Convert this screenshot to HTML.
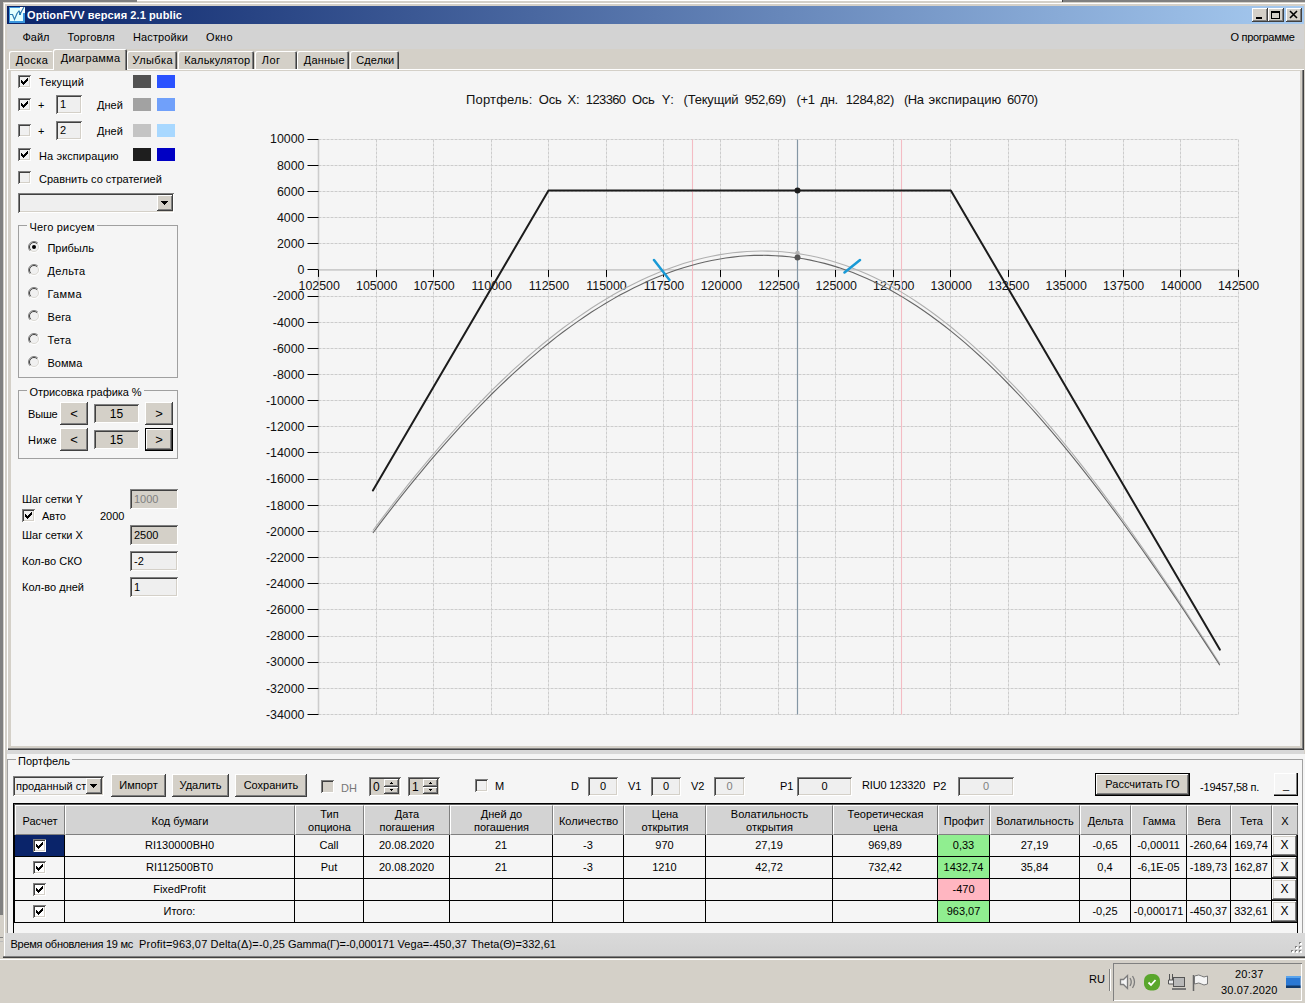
<!DOCTYPE html>
<html lang="ru"><head><meta charset="utf-8"><title>OptionFVV версия 2.1 public</title>
<style>
*{box-sizing:border-box}
html,body{margin:0;padding:0}
body{width:1305px;height:1003px;overflow:hidden;background:#d4d0c8;position:relative;
 font-family:"Liberation Sans",sans-serif;font-size:11px;line-height:13px;color:#000}
div,span{position:absolute;white-space:pre}
.c{text-align:center}
.r{text-align:right}
.btn{background:#d4d0c8;box-shadow:inset -1px -1px 0 #404040,inset 1px 1px 0 #fff,inset -2px -2px 0 #808080,inset 2px 2px 0 #d4d0c8;text-align:center}
.sunk{box-shadow:inset 1px 1px 0 #808080,inset -1px -1px 0 #fff,inset 2px 2px 0 #404040,inset -2px -2px 0 #d4d0c8}
.tb{background:#efefef}
.tbd{background:#d4d0c8}
.cb{width:13px;height:13px;background:#f0f0f0}
.cbw{background:#fff}
.gb{border:1px solid #a0a0a0}
.gl{background:#f5f5f5;padding:0 2px}
.rad{width:12px;height:12px;border-radius:50%;background:#f0f0f0;box-shadow:inset 1px 1px 0 #808080,inset -1px -1px 0 #fff,inset 2px 2px 0 #404040}
.sw{width:18px;height:13px}
.hc{background:#d3d3d3;border-right:1px solid #808080;border-left:1px solid #fff;border-top:1px solid #fff;border-bottom:1px solid #808080;text-align:center}
.cell{border-right:1px solid #000;border-bottom:1px solid #000;background:#f5f5f5;text-align:center;line-height:21px}
svg{position:absolute}
svg text{font-family:"Liberation Sans",sans-serif}
</style></head>
<body>
<div style="left:0px;top:0px;width:137px;height:2px;background:#808080"></div>
<div style="left:137px;top:0px;width:925px;height:1px;background:#fff"></div>
<div style="left:1062px;top:0px;width:243px;height:2px;background:#808080"></div>
<div style="left:1062px;top:0px;width:1px;height:2px;background:#404040"></div>
<div style="left:0px;top:0px;width:3px;height:915px;background:#808080"></div>
<div style="left:0px;top:937px;width:4px;height:1px;background:#808080"></div>
<div style="left:0px;top:941px;width:4px;height:1px;background:#bbb"></div>
<div style="left:3px;top:2px;width:1302px;height:956px;background:#d4d0c8;box-shadow:inset 1px 1px 0 #d4d0c8,inset 2px 2px 0 #fff"></div>
<div style="left:7px;top:6px;width:1297px;height:18px;background:linear-gradient(90deg,#0a246a 0%,#a6caf0 100%)"></div>
<svg width="16" height="16" viewBox="0 0 16 16" style="left:9px;top:7px"><g shape-rendering="crispEdges"><rect width="16" height="16" fill="#3a96de"/><rect x="1" y="1" width="13" height="13" fill="#e2ffff"/><rect x="11" y="0" width="5" height="6" fill="#fff"/><rect x="14" y="0" width="2" height="6" fill="#f4ffff"/><rect x="10" y="5" width="2" height="3" fill="#2a7ab0"/></g><path d="M1 7.500h2.500l2 5 2.500-6 2-2.500 1.500 2.500 1.500-3 2-3.500" fill="none" stroke="#2a7ab0" stroke-width="1.200"/></svg>
<div style="left:27px;top:9px;letter-spacing:0.095px;color:#fff;font-weight:bold">OptionFVV версия 2.1 public</div>
<div class="btn" style="left:1252px;top:8px;width:16px;height:14px;"></div>
<div class="btn" style="left:1268px;top:8px;width:16px;height:14px;"></div>
<div class="btn" style="left:1286px;top:8px;width:16px;height:14px;"></div>
<svg width="60" height="18" viewBox="0 0 60 18" style="left:1250px;top:6px" shape-rendering="crispEdges"><rect x="6" y="11" width="6" height="2" fill="#000"/><rect x="21.5" y="5.5" width="8" height="7" fill="none" stroke="#000"/><rect x="21" y="5" width="9" height="2" fill="#000"/><path d="M40 5l7 7M47 5l-7 7" stroke="#000" stroke-width="1.6" shape-rendering="auto"/></svg>
<div style="left:7px;top:24px;width:1297px;height:25px;background:#d3d3d3"></div>
<div style="left:22.5px;top:31px;letter-spacing:-0.011px;">Файл</div>
<div style="left:67.5px;top:31px;letter-spacing:0.193px;">Торговля</div>
<div style="left:133px;top:31px;letter-spacing:0.118px;">Настройки</div>
<div style="left:206px;top:31px;letter-spacing:0.359px;">Окно</div>
<div style="left:1230.5px;top:31px;letter-spacing:-0.300px;">О программе</div>
<div style="left:9px;top:51px;width:44px;height:19px;box-shadow:inset 1px 1px 0 #fff,inset 0 0 0 #fff;background:#d4d0c8;border-radius:2px 2px 0 0;"></div>
<div style="left:15.8px;top:54px;letter-spacing:0.427px;">Доска</div>
<div style="left:127px;top:51px;width:50px;height:19px;box-shadow:inset 1px 1px 0 #fff,inset -1px 0 0 #404040,inset -2px 0 0 #808080;background:#d4d0c8;border-radius:2px 2px 0 0;"></div>
<div style="left:132.5px;top:54px;letter-spacing:0.408px;">Улыбка</div>
<div style="left:178px;top:51px;width:76px;height:19px;box-shadow:inset 1px 1px 0 #fff,inset -1px 0 0 #404040,inset -2px 0 0 #808080;background:#d4d0c8;border-radius:2px 2px 0 0;"></div>
<div style="left:184.3px;top:54px;letter-spacing:0.146px;">Калькулятор</div>
<div style="left:255px;top:51px;width:42px;height:19px;box-shadow:inset 1px 1px 0 #fff,inset -1px 0 0 #404040,inset -2px 0 0 #808080;background:#d4d0c8;border-radius:2px 2px 0 0;"></div>
<div style="left:261.7px;top:54px;letter-spacing:0.550px;">Лог</div>
<div style="left:297px;top:51px;width:52px;height:19px;box-shadow:inset 1px 1px 0 #fff,inset -1px 0 0 #404040,inset -2px 0 0 #808080;background:#d4d0c8;border-radius:2px 2px 0 0;"></div>
<div style="left:303.8px;top:54px;letter-spacing:0.209px;">Данные</div>
<div style="left:350px;top:51px;width:49px;height:19px;box-shadow:inset 1px 1px 0 #fff,inset -1px 0 0 #404040,inset -2px 0 0 #808080;background:#d4d0c8;border-radius:2px 2px 0 0;"></div>
<div style="left:356.3px;top:54px;letter-spacing:0.085px;">Сделки</div>
<div style="left:7px;top:69px;width:1297px;height:681px;background:#d4d0c8;box-shadow:inset 1px 1px 0 #fff,inset -1px -1px 0 #404040,inset -2px -2px 0 #808080"></div>
<div style="left:11px;top:71px;width:1289px;height:675px;background:#f5f5f5"></div>
<div style="left:53px;top:49px;width:74px;height:21px;box-shadow:inset 1px 1px 0 #fff,inset -1px 0 0 #404040,inset -2px 0 0 #808080;background:#d4d0c8;border-radius:2px 2px 0 0;"></div>
<div style="left:54px;top:68px;width:70px;height:3px;background:#d4d0c8"></div>
<div style="left:60.8px;top:52px;letter-spacing:0.255px;">Диаграмма</div>
<div class="cb sunk" style="left:18px;top:75px;width:13px;height:13px;"><svg width="13" height="13" viewBox="0 0 13 13" style="left:0;top:0" shape-rendering="crispEdges"><path d="M3 5h1v3h-1zM4 6h1v3h-1zM5 7h1v3h-1zM6 6h1v3h-1zM7 5h1v3h-1zM8 4h1v3h-1zM9 3h1v3h-1z" fill="#000"/></svg></div>
<div class="cb sunk" style="left:18px;top:98px;width:13px;height:13px;"><svg width="13" height="13" viewBox="0 0 13 13" style="left:0;top:0" shape-rendering="crispEdges"><path d="M3 5h1v3h-1zM4 6h1v3h-1zM5 7h1v3h-1zM6 6h1v3h-1zM7 5h1v3h-1zM8 4h1v3h-1zM9 3h1v3h-1z" fill="#000"/></svg></div>
<div class="cb sunk" style="left:18px;top:124px;width:13px;height:13px;"></div>
<div class="cb sunk" style="left:18px;top:148px;width:13px;height:13px;"><svg width="13" height="13" viewBox="0 0 13 13" style="left:0;top:0" shape-rendering="crispEdges"><path d="M3 5h1v3h-1zM4 6h1v3h-1zM5 7h1v3h-1zM6 6h1v3h-1zM7 5h1v3h-1zM8 4h1v3h-1zM9 3h1v3h-1z" fill="#000"/></svg></div>
<div class="cb sunk" style="left:18px;top:171px;width:13px;height:13px;"></div>
<div style="left:39px;top:76px;letter-spacing:0.15px">Текущий</div>
<div style="left:38px;top:99px;">+</div>
<div style="left:38px;top:125px;">+</div>
<div class="sunk tb" style="left:56px;top:95px;width:26px;height:19px;"></div>
<div style="left:60px;top:98px;">1</div>
<div class="sunk tb" style="left:56px;top:121px;width:26px;height:19px;"></div>
<div style="left:60px;top:124px;">2</div>
<div style="left:97px;top:99px;">Дней</div>
<div style="left:97px;top:125px;">Дней</div>
<div style="left:39px;top:150px;letter-spacing:0.1px">На экспирацию</div>
<div style="left:39px;top:173px;">Сравнить со стратегией</div>
<div style="left:133px;top:75px;width:18px;height:13px;background:#525252"></div>
<div style="left:157px;top:75px;width:18px;height:13px;background:#2a52ff"></div>
<div style="left:133px;top:98px;width:18px;height:13px;background:#a2a2a2"></div>
<div style="left:157px;top:98px;width:18px;height:13px;background:#70a0fa"></div>
<div style="left:133px;top:124px;width:18px;height:13px;background:#c4c4c4"></div>
<div style="left:157px;top:124px;width:18px;height:13px;background:#a8d8ff"></div>
<div style="left:133px;top:148px;width:18px;height:13px;background:#1e1e1e"></div>
<div style="left:157px;top:148px;width:18px;height:13px;background:#0000c4"></div>
<div class="sunk tb" style="left:18px;top:193px;width:156px;height:20px;"></div>
<div class="btn" style="left:157px;top:195px;width:16px;height:16px;"><svg width="16" height="16" style="left:0;top:0" shape-rendering="crispEdges"><path d="M4 6h7l-3.5 4z" fill="#000"/></svg></div>
<div class="gb" style="left:18px;top:225px;width:160px;height:153px;"></div>
<div class="gl" style="left:27.4px;top:221px;letter-spacing:0.198px;">Чего рисуем</div>
<svg width="12" height="12" viewBox="0 0 12 12" style="left:28px;top:241px"><circle cx="6" cy="6" r="5" fill="#f0f0f0"/><path d="M2.100 9.900A5.500 5.500 0 0 1 9.900 2.100" fill="none" stroke="#808080"/><path d="M9.900 2.100A5.500 5.500 0 0 1 2.100 9.900" fill="none" stroke="#fff"/><path d="M2.800 9.200A4.500 4.500 0 0 1 9.200 2.800" fill="none" stroke="#404040"/><path d="M9.200 2.800A4.500 4.500 0 0 1 2.800 9.200" fill="none" stroke="#dcdad4"/><circle cx="6" cy="6" r="2" fill="#000"/></svg>
<div style="left:47.4px;top:242px;letter-spacing:-0.004px;">Прибыль</div>
<svg width="12" height="12" viewBox="0 0 12 12" style="left:28px;top:264px"><circle cx="6" cy="6" r="5" fill="#f0f0f0"/><path d="M2.100 9.900A5.500 5.500 0 0 1 9.900 2.100" fill="none" stroke="#808080"/><path d="M9.900 2.100A5.500 5.500 0 0 1 2.100 9.900" fill="none" stroke="#fff"/><path d="M2.800 9.200A4.500 4.500 0 0 1 9.200 2.800" fill="none" stroke="#404040"/><path d="M9.200 2.800A4.500 4.500 0 0 1 2.800 9.200" fill="none" stroke="#dcdad4"/></svg>
<div style="left:47.4px;top:265px;letter-spacing:0.445px;">Дельта</div>
<svg width="12" height="12" viewBox="0 0 12 12" style="left:28px;top:287px"><circle cx="6" cy="6" r="5" fill="#f0f0f0"/><path d="M2.100 9.900A5.500 5.500 0 0 1 9.900 2.100" fill="none" stroke="#808080"/><path d="M9.900 2.100A5.500 5.500 0 0 1 2.100 9.900" fill="none" stroke="#fff"/><path d="M2.800 9.200A4.500 4.500 0 0 1 9.200 2.800" fill="none" stroke="#404040"/><path d="M9.200 2.800A4.500 4.500 0 0 1 2.800 9.200" fill="none" stroke="#dcdad4"/></svg>
<div style="left:47.4px;top:288px;letter-spacing:0.380px;">Гамма</div>
<svg width="12" height="12" viewBox="0 0 12 12" style="left:28px;top:310px"><circle cx="6" cy="6" r="5" fill="#f0f0f0"/><path d="M2.100 9.900A5.500 5.500 0 0 1 9.900 2.100" fill="none" stroke="#808080"/><path d="M9.900 2.100A5.500 5.500 0 0 1 2.100 9.900" fill="none" stroke="#fff"/><path d="M2.800 9.200A4.500 4.500 0 0 1 9.200 2.800" fill="none" stroke="#404040"/><path d="M9.200 2.800A4.500 4.500 0 0 1 2.800 9.200" fill="none" stroke="#dcdad4"/></svg>
<div style="left:47.4px;top:311px;letter-spacing:0.164px;">Вега</div>
<svg width="12" height="12" viewBox="0 0 12 12" style="left:28px;top:333px"><circle cx="6" cy="6" r="5" fill="#f0f0f0"/><path d="M2.100 9.900A5.500 5.500 0 0 1 9.900 2.100" fill="none" stroke="#808080"/><path d="M9.900 2.100A5.500 5.500 0 0 1 2.100 9.900" fill="none" stroke="#fff"/><path d="M2.800 9.200A4.500 4.500 0 0 1 9.200 2.800" fill="none" stroke="#404040"/><path d="M9.200 2.800A4.500 4.500 0 0 1 2.800 9.200" fill="none" stroke="#dcdad4"/></svg>
<div style="left:47.4px;top:334px;letter-spacing:0.278px;">Тета</div>
<svg width="12" height="12" viewBox="0 0 12 12" style="left:28px;top:356px"><circle cx="6" cy="6" r="5" fill="#f0f0f0"/><path d="M2.100 9.900A5.500 5.500 0 0 1 9.900 2.100" fill="none" stroke="#808080"/><path d="M9.900 2.100A5.500 5.500 0 0 1 2.100 9.900" fill="none" stroke="#fff"/><path d="M2.800 9.200A4.500 4.500 0 0 1 9.200 2.800" fill="none" stroke="#404040"/><path d="M9.200 2.800A4.500 4.500 0 0 1 2.800 9.200" fill="none" stroke="#dcdad4"/></svg>
<div style="left:47.4px;top:357px;letter-spacing:0.060px;">Вомма</div>
<div class="gb" style="left:18px;top:390px;width:160px;height:69px;"></div>
<div class="gl" style="left:27.4px;top:386px;letter-spacing:-0.049px;">Отрисовка графика %</div>
<div style="left:28px;top:408px;letter-spacing:-0.172px;">Выше</div>
<div class="btn" style="left:60px;top:402px;width:28px;height:23px;line-height:23px;font-size:13px">&lt;</div>
<div class="sunk tbd c" style="left:94px;top:404px;width:45px;height:19px;line-height:21px;font-size:12px">15</div>
<div class="btn" style="left:145px;top:402px;width:28px;height:23px;line-height:23px;font-size:13px">&gt;</div>
<div style="left:28px;top:434px;letter-spacing:0.359px;">Ниже</div>
<div class="btn" style="left:60px;top:428px;width:28px;height:23px;line-height:23px;font-size:13px">&lt;</div>
<div class="sunk tbd c" style="left:94px;top:430px;width:45px;height:19px;line-height:21px;font-size:12px">15</div>
<div style="left:145px;top:428px;width:28px;height:23px;background:#000"></div>
<div class="btn" style="left:146px;top:429px;width:26px;height:21px;line-height:21px;font-size:13px">&gt;</div>
<div style="left:22px;top:493px;">Шаг сетки Y</div>
<div class="sunk tbd" style="left:130px;top:489px;width:48px;height:20px;"></div>
<div style="left:134px;top:493px;color:#808080">1000</div>
<div class="cb sunk" style="left:22px;top:509px;width:13px;height:13px;"><svg width="13" height="13" viewBox="0 0 13 13" style="left:0;top:0" shape-rendering="crispEdges"><path d="M3 5h1v3h-1zM4 6h1v3h-1zM5 7h1v3h-1zM6 6h1v3h-1zM7 5h1v3h-1zM8 4h1v3h-1zM9 3h1v3h-1z" fill="#000"/></svg></div>
<div style="left:42px;top:510px;">Авто</div>
<div style="left:100px;top:510px;">2000</div>
<div style="left:22px;top:529px;">Шаг сетки X</div>
<div class="sunk tbd" style="left:130px;top:525px;width:48px;height:20px;"></div>
<div style="left:134px;top:529px;">2500</div>
<div style="left:22px;top:555px;">Кол-во СКО</div>
<div class="sunk tb" style="left:130px;top:551px;width:48px;height:20px;"></div>
<div style="left:134px;top:555px;">-2</div>
<div style="left:22px;top:581px;">Кол-во дней</div>
<div class="sunk tb" style="left:130px;top:577px;width:48px;height:20px;"></div>
<div style="left:134px;top:581px;">1</div>
<svg width="1305" height="1003" viewBox="0 0 1305 1003" style="left:0;top:0"><path d="M376.5 139.5V714.5M433.5 139.5V714.5M491.5 139.5V714.5M548.5 139.5V714.5M606.5 139.5V714.5M663.5 139.5V714.5M720.5 139.5V714.5M778.5 139.5V714.5M835.5 139.5V714.5M893.5 139.5V714.5M950.5 139.5V714.5M1008.5 139.5V714.5M1065.5 139.5V714.5M1123.5 139.5V714.5M1180.5 139.5V714.5M1238.5 139.5V714.5M318.5 714.5H1238.5M318.5 688.5H1238.5M318.5 662.5H1238.5M318.5 636.5H1238.5M318.5 609.5H1238.5M318.5 583.5H1238.5M318.5 557.5H1238.5M318.5 531.5H1238.5M318.5 505.5H1238.5M318.5 479.5H1238.5M318.5 452.5H1238.5M318.5 426.5H1238.5M318.5 400.5H1238.5M318.5 374.5H1238.5M318.5 348.5H1238.5M318.5 322.5H1238.5M318.5 296.5H1238.5M318.5 243.5H1238.5M318.5 217.5H1238.5M318.5 191.5H1238.5M318.5 165.5H1238.5M318.5 139.5H1238.5" fill="none" stroke="#cccccc" stroke-width="1" stroke-dasharray="3 1"/><path d="M318.5 139.5V714.5M318.5 269.9H1238.5" fill="none" stroke="#cccccc" stroke-width="1.6"/><path d="M307.5 714.5H318.5M307.5 688.5H318.5M307.5 662.5H318.5M307.5 636.5H318.5M307.5 609.5H318.5M307.5 583.5H318.5M307.5 557.5H318.5M307.5 531.5H318.5M307.5 505.5H318.5M307.5 479.5H318.5M307.5 452.5H318.5M307.5 426.5H318.5M307.5 400.5H318.5M307.5 374.5H318.5M307.5 348.5H318.5M307.5 322.5H318.5M307.5 296.5H318.5M307.5 269.5H318.5M307.5 243.5H318.5M307.5 217.5H318.5M307.5 191.5H318.5M307.5 165.5H318.5M307.5 139.5H318.5M318.5 269.9V276.9M376.5 269.9V276.9M433.5 269.9V276.9M491.5 269.9V276.9M548.5 269.9V276.9M606.5 269.9V276.9M663.5 269.9V276.9M720.5 269.9V276.9M778.5 269.9V276.9M835.5 269.9V276.9M893.5 269.9V276.9M950.5 269.9V276.9M1008.5 269.9V276.9M1065.5 269.9V276.9M1123.5 269.9V276.9M1180.5 269.9V276.9M1238.5 269.9V276.9" fill="none" stroke="#000" stroke-width="1"/><g font-size="12.4" fill="#111"><text x="304.5" y="718.8" text-anchor="end">-34000</text><text x="304.5" y="692.6" text-anchor="end">-32000</text><text x="304.5" y="666.4" text-anchor="end">-30000</text><text x="304.5" y="640.3" text-anchor="end">-28000</text><text x="304.5" y="614.1" text-anchor="end">-26000</text><text x="304.5" y="588.0" text-anchor="end">-24000</text><text x="304.5" y="561.8" text-anchor="end">-22000</text><text x="304.5" y="535.7" text-anchor="end">-20000</text><text x="304.5" y="509.6" text-anchor="end">-18000</text><text x="304.5" y="483.4" text-anchor="end">-16000</text><text x="304.5" y="457.2" text-anchor="end">-14000</text><text x="304.5" y="431.1" text-anchor="end">-12000</text><text x="304.5" y="404.9" text-anchor="end">-10000</text><text x="304.5" y="378.8" text-anchor="end">-8000</text><text x="304.5" y="352.6" text-anchor="end">-6000</text><text x="304.5" y="326.5" text-anchor="end">-4000</text><text x="304.5" y="300.3" text-anchor="end">-2000</text><text x="304.5" y="274.2" text-anchor="end">0</text><text x="304.5" y="248.0" text-anchor="end">2000</text><text x="304.5" y="221.9" text-anchor="end">4000</text><text x="304.5" y="195.8" text-anchor="end">6000</text><text x="304.5" y="169.6" text-anchor="end">8000</text><text x="304.5" y="143.4" text-anchor="end">10000</text><text x="319.2" y="289.9" text-anchor="middle">102500</text><text x="376.7" y="289.9" text-anchor="middle">105000</text><text x="434.1" y="289.9" text-anchor="middle">107500</text><text x="491.6" y="289.9" text-anchor="middle">110000</text><text x="549.0" y="289.9" text-anchor="middle">112500</text><text x="606.5" y="289.9" text-anchor="middle">115000</text><text x="664.0" y="289.9" text-anchor="middle">117500</text><text x="721.4" y="289.9" text-anchor="middle">120000</text><text x="778.9" y="289.9" text-anchor="middle">122500</text><text x="836.3" y="289.9" text-anchor="middle">125000</text><text x="893.8" y="289.9" text-anchor="middle">127500</text><text x="951.3" y="289.9" text-anchor="middle">130000</text><text x="1008.7" y="289.9" text-anchor="middle">132500</text><text x="1066.2" y="289.9" text-anchor="middle">135000</text><text x="1123.6" y="289.9" text-anchor="middle">137500</text><text x="1181.1" y="289.9" text-anchor="middle">140000</text><text x="1238.6" y="289.9" text-anchor="middle">142500</text></g><g font-size="13" fill="#111"><text x="466.1" y="104" textLength="66.2" lengthAdjust="spacing">Портфель:</text><text x="538.8" y="104" textLength="23.0" lengthAdjust="spacing">Ось</text><text x="567.5" y="104" textLength="12.0" lengthAdjust="spacing">X:</text><text x="585.8" y="104" textLength="40.3" lengthAdjust="spacing">123360</text><text x="631.9" y="104" textLength="23.0" lengthAdjust="spacing">Ось</text><text x="661.8" y="104" textLength="12.0" lengthAdjust="spacing">Y:</text><text x="683.5" y="104" textLength="55.0" lengthAdjust="spacing">(Текущий</text><text x="744.5" y="104" textLength="41.5" lengthAdjust="spacing">952,69)</text><text x="796.5" y="104" textLength="18.5" lengthAdjust="spacing">(+1</text><text x="820.5" y="104" textLength="17.5" lengthAdjust="spacing">дн.</text><text x="845.7" y="104" textLength="48.6" lengthAdjust="spacing">1284,82)</text><text x="904.0" y="104" textLength="20.0" lengthAdjust="spacing">(На</text><text x="928.5" y="104" textLength="72.7" lengthAdjust="spacing">экспирацию</text><text x="1007.0" y="104" textLength="31.0" lengthAdjust="spacing">6070)</text></g><path d="M692.5 139.5V714.5M901.5 139.5V714.5" stroke="#f4bcc4" stroke-width="1.1" fill="none"/><path d="M797.5 139.5V714.5" stroke="#8496a4" stroke-width="1.2" fill="none"/><polyline points="372.9,530.5 379.9,521.1 387.0,511.8 394.0,502.6 401.1,493.6 408.1,484.7 415.2,475.9 422.3,467.3 429.3,458.9 436.4,450.5 443.4,442.4 450.5,434.3 457.5,426.5 464.6,418.7 471.7,411.2 478.7,403.8 485.8,396.5 492.8,389.4 499.9,382.5 506.9,375.8 514.0,369.2 521.1,362.8 528.1,356.5 535.2,350.4 542.2,344.5 549.3,338.8 556.3,333.2 563.4,327.8 570.5,322.6 577.5,317.6 584.6,312.7 591.6,308.0 598.7,303.5 605.8,299.2 612.8,295.0 619.9,291.1 626.9,287.3 634.0,283.7 641.0,280.2 648.1,277.0 655.2,273.9 662.2,271.1 669.3,268.4 676.3,265.9 683.4,263.6 690.4,261.5 697.5,259.5 704.6,257.8 711.6,256.3 718.7,254.9 725.7,253.8 732.8,252.8 739.8,252.1 746.9,251.5 754.0,251.2 761.0,251.0 768.1,251.1 775.1,251.3 782.2,251.8 789.2,252.5 796.3,253.4 803.4,254.5 810.4,255.8 817.5,257.3 824.5,259.0 831.6,261.0 838.7,263.2 845.7,265.6 852.8,268.2 859.8,271.0 866.9,274.1 873.9,277.3 881.0,280.8 888.1,284.5 895.1,288.4 902.2,292.6 909.2,296.9 916.3,301.5 923.3,306.3 930.4,311.3 937.5,316.5 944.5,321.9 951.6,327.5 958.6,333.4 965.7,339.4 972.7,345.6 979.8,352.1 986.9,358.7 993.9,365.5 1001.0,372.6 1008.0,379.8 1015.1,387.2 1022.2,394.7 1029.2,402.5 1036.3,410.4 1043.3,418.5 1050.4,426.8 1057.4,435.2 1064.5,443.8 1071.6,452.5 1078.6,461.4 1085.7,470.4 1092.7,479.5 1099.8,488.8 1106.8,498.3 1113.9,507.8 1121.0,517.5 1128.0,527.3 1135.1,537.2 1142.1,547.3 1149.2,557.4 1156.2,567.6 1163.3,578.0 1170.4,588.4 1177.4,598.9 1184.5,609.5 1191.5,620.2 1198.6,631.0 1205.6,641.8 1212.7,652.7 1219.8,663.7" fill="none" stroke="#b0b0b0" stroke-width="1.1"/><polyline points="372.9,533.0 379.9,523.7 387.0,514.4 394.0,505.4 401.1,496.4 408.1,487.6 415.2,478.9 422.3,470.4 429.3,461.9 436.4,453.7 443.4,445.6 450.5,437.6 457.5,429.8 464.6,422.1 471.7,414.6 478.7,407.3 485.8,400.1 492.8,393.0 499.9,386.2 506.9,379.5 514.0,372.9 521.1,366.5 528.1,360.3 535.2,354.3 542.2,348.4 549.3,342.7 556.3,337.1 563.4,331.8 570.5,326.6 577.5,321.6 584.6,316.7 591.6,312.0 598.7,307.6 605.8,303.2 612.8,299.1 619.9,295.1 626.9,291.4 634.0,287.8 641.0,284.4 648.1,281.1 655.2,278.1 662.2,275.2 669.3,272.6 676.3,270.1 683.4,267.8 690.4,265.7 697.5,263.7 704.6,262.0 711.6,260.5 718.7,259.2 725.7,258.0 732.8,257.1 739.8,256.3 746.9,255.8 754.0,255.4 761.0,255.3 768.1,255.4 775.1,255.7 782.2,256.1 789.2,256.8 796.3,257.7 803.4,258.8 810.4,260.1 817.5,261.7 824.5,263.4 831.6,265.4 838.7,267.6 845.7,270.0 852.8,272.6 859.8,275.4 866.9,278.4 873.9,281.7 881.0,285.2 888.1,288.8 895.1,292.7 902.2,296.9 909.2,301.2 916.3,305.7 923.3,310.5 930.4,315.5 937.5,320.7 944.5,326.0 951.6,331.6 958.6,337.4 965.7,343.4 972.7,349.6 979.8,356.0 986.9,362.6 993.9,369.4 1001.0,376.3 1008.0,383.5 1015.1,390.8 1022.2,398.3 1029.2,406.0 1036.3,413.9 1043.3,421.9 1050.4,430.1 1057.4,438.4 1064.5,446.9 1071.6,455.6 1078.6,464.4 1085.7,473.3 1092.7,482.4 1099.8,491.6 1106.8,501.0 1113.9,510.4 1121.0,520.0 1128.0,529.8 1135.1,539.6 1142.1,549.5 1149.2,559.6 1156.2,569.8 1163.3,580.0 1170.4,590.4 1177.4,600.8 1184.5,611.3 1191.5,622.0 1198.6,632.7 1205.6,643.4 1212.7,654.3 1219.8,665.2" fill="none" stroke="#666" stroke-width="1.1"/><polyline points="372.9,490.4 548.5,190.5 950.8,190.5 1219.8,649.6" fill="none" stroke="#1c1c1c" stroke-width="2" stroke-linejoin="round" stroke-linecap="round"/><path d="M654 260L669.500 280M844.500 272.500L860 260" stroke="#1a9ad6" stroke-width="2.500" fill="none" stroke-linecap="round"/><circle cx="797.5" cy="253.1" r="2.3" fill="#b4b4b4"/><circle cx="797.5" cy="257.4" r="3" fill="#555"/><circle cx="797.5" cy="190.5" r="3" fill="#1c1c1c"/></svg>
<div style="left:7px;top:750px;width:1297px;height:4px;background:#d8d8d8"></div>
<div style="left:7px;top:754px;width:1298px;height:179px;background:#f5f5f5"></div>
<div class="gb" style="left:7px;top:759px;width:1296px;height:175px;border-color:#a0a0a0;border-bottom:none"></div>
<div class="gl" style="left:16px;top:755px;">Портфель</div>
<div class="sunk tb" style="left:13px;top:776px;width:91px;height:20px;"></div>
<div style="left:16px;top:780px;">проданный ст</div>
<div class="btn" style="left:86px;top:778px;width:16px;height:16px;"><svg width="16" height="16" style="left:0;top:0" shape-rendering="crispEdges"><path d="M4 6h7l-3.5 4z" fill="#000"/></svg></div>
<div class="btn" style="left:111px;top:774px;width:55px;height:23px;line-height:22px">Импорт</div>
<div class="btn" style="left:172px;top:774px;width:57px;height:23px;line-height:22px">Удалить</div>
<div class="btn" style="left:235px;top:774px;width:72px;height:23px;line-height:22px">Сохранить</div>
<div class="cb sunk" style="left:321px;top:780px;width:13px;height:13px;background:#d4d0c8;"></div>
<div style="left:341px;top:782px;color:#777">DH</div>
<div class="sunk tbd" style="left:369px;top:777px;width:32px;height:19px;"></div>
<div style="left:373px;top:781px;font-size:12px">0</div>
<div class="btn" style="left:384px;top:779px;width:15px;height:8px;"><svg width="15" height="8" style="left:0;top:0" shape-rendering="crispEdges"><path d="M6 5h3v-1h-1v-1h-1v1h-1z" fill="#000"/></svg></div>
<div class="btn" style="left:384px;top:787px;width:15px;height:7px;"><svg width="15" height="7" style="left:0;top:0" shape-rendering="crispEdges"><path d="M6 2h3v1h-1v1h-1v-1h-1z" fill="#000"/></svg></div>
<div class="sunk tbd" style="left:408px;top:777px;width:32px;height:19px;"></div>
<div style="left:412px;top:781px;font-size:12px">1</div>
<div class="btn" style="left:423px;top:779px;width:15px;height:8px;"><svg width="15" height="8" style="left:0;top:0" shape-rendering="crispEdges"><path d="M6 5h3v-1h-1v-1h-1v1h-1z" fill="#000"/></svg></div>
<div class="btn" style="left:423px;top:787px;width:15px;height:7px;"><svg width="15" height="7" style="left:0;top:0" shape-rendering="crispEdges"><path d="M6 2h3v1h-1v1h-1v-1h-1z" fill="#000"/></svg></div>
<div class="cb sunk" style="left:475px;top:779px;width:13px;height:13px;"></div>
<div style="left:495px;top:780px;">M</div>
<div style="left:571px;top:780px;">D</div>
<div class="sunk tb c" style="left:588px;top:777px;width:30px;height:19px;line-height:19px">0</div>
<div style="left:628px;top:780px;">V1</div>
<div class="sunk tb c" style="left:651px;top:777px;width:30px;height:19px;line-height:19px">0</div>
<div style="left:691px;top:780px;">V2</div>
<div class="sunk tb c" style="left:714px;top:777px;width:31px;height:19px;line-height:19px;color:#808080">0</div>
<div style="left:780px;top:780px;">P1</div>
<div class="sunk tb c" style="left:797px;top:777px;width:55px;height:19px;line-height:19px">0</div>
<div style="left:862px;top:779px;letter-spacing:-0.15px">RIU0 123320</div>
<div style="left:933px;top:780px;">P2</div>
<div class="sunk tb c" style="left:958px;top:777px;width:56px;height:19px;line-height:19px;color:#808080">0</div>
<div style="left:1095px;top:773px;width:95px;height:23px;background:#000"></div>
<div class="btn" style="left:1096px;top:774px;width:93px;height:21px;line-height:20px">Рассчитать ГО</div>
<div style="left:1200px;top:781px;letter-spacing:-0.2px">-19457,58 п.</div>
<div style="left:1274px;top:773px;width:24px;height:23px;background:#f5f5f5;line-height:24px;text-align:center;box-shadow:inset -1px -1px 0 #000,inset -2px -2px 0 #808080,inset 1px 1px 0 #fff">_</div>
<div style="left:13px;top:803px;width:1285px;height:130px;background:#f5f5f5;border:1px solid #000;border-bottom:none"></div>
<div style="left:14px;top:804px;width:1283px;height:119px;background:#000"></div>
<div style="left:14px;top:804px;width:1283px;height:31px;background:#5a5a5a"></div>
<div class="hc" style="left:15px;top:805px;width:50px;height:30px;line-height:30px;padding-top:0px">Расчет</div>
<div class="hc" style="left:65px;top:805px;width:230px;height:30px;line-height:30px;padding-top:0px">Код бумаги</div>
<div class="hc" style="left:295px;top:805px;width:69px;height:30px;line-height:13px;padding-top:2px">Тип
опциона</div>
<div class="hc" style="left:364px;top:805px;width:86px;height:30px;line-height:13px;padding-top:2px">Дата
погашения</div>
<div class="hc" style="left:450px;top:805px;width:103px;height:30px;line-height:13px;padding-top:2px">Дней до
погашения</div>
<div class="hc" style="left:553px;top:805px;width:71px;height:30px;line-height:30px;padding-top:0px">Количество</div>
<div class="hc" style="left:624px;top:805px;width:82px;height:30px;line-height:13px;padding-top:2px">Цена
открытия</div>
<div class="hc" style="left:706px;top:805px;width:127px;height:30px;line-height:13px;padding-top:2px">Волатильность
открытия</div>
<div class="hc" style="left:833px;top:805px;width:105px;height:30px;line-height:13px;padding-top:2px">Теоретическая
цена</div>
<div class="hc" style="left:938px;top:805px;width:52px;height:30px;line-height:30px;padding-top:0px">Профит</div>
<div class="hc" style="left:990px;top:805px;width:90px;height:30px;line-height:30px;padding-top:0px">Волатильность</div>
<div class="hc" style="left:1080px;top:805px;width:51px;height:30px;line-height:30px;padding-top:0px">Дельта</div>
<div class="hc" style="left:1131px;top:805px;width:56px;height:30px;line-height:30px;padding-top:0px">Гамма</div>
<div class="hc" style="left:1187px;top:805px;width:44px;height:30px;line-height:30px;padding-top:0px">Вега</div>
<div class="hc" style="left:1231px;top:805px;width:41px;height:30px;line-height:30px;padding-top:0px">Тета</div>
<div class="hc" style="left:1272px;top:805px;width:26px;height:30px;line-height:30px;padding-top:0px">X</div>
<div class="cell" style="left:15px;top:835px;width:50px;height:22px;background:#0a246a;"></div>
<div class="cell" style="left:65px;top:835px;width:230px;height:22px;">RI130000BH0</div>
<div class="cell" style="left:295px;top:835px;width:69px;height:22px;">Call</div>
<div class="cell" style="left:364px;top:835px;width:86px;height:22px;">20.08.2020</div>
<div class="cell" style="left:450px;top:835px;width:103px;height:22px;">21</div>
<div class="cell" style="left:553px;top:835px;width:71px;height:22px;">-3</div>
<div class="cell" style="left:624px;top:835px;width:82px;height:22px;">970</div>
<div class="cell" style="left:706px;top:835px;width:127px;height:22px;">27,19</div>
<div class="cell" style="left:833px;top:835px;width:105px;height:22px;">969,89</div>
<div class="cell" style="left:938px;top:835px;width:52px;height:22px;background:#90ee90;">0,33</div>
<div class="cell" style="left:990px;top:835px;width:90px;height:22px;">27,19</div>
<div class="cell" style="left:1080px;top:835px;width:51px;height:22px;">-0,65</div>
<div class="cell" style="left:1131px;top:835px;width:56px;height:22px;">-0,00011</div>
<div class="cell" style="left:1187px;top:835px;width:44px;height:22px;">-260,64</div>
<div class="cell" style="left:1231px;top:835px;width:41px;height:22px;">169,74</div>
<div class="cell" style="left:1272px;top:835px;width:26px;height:22px;"></div>
<div class="cb sunk cbw" style="left:33px;top:839px;width:13px;height:13px;"><svg width="13" height="13" viewBox="0 0 13 13" style="left:0;top:0" shape-rendering="crispEdges"><path d="M3 5h1v3h-1zM4 6h1v3h-1zM5 7h1v3h-1zM6 6h1v3h-1zM7 5h1v3h-1zM8 4h1v3h-1zM9 3h1v3h-1z" fill="#000"/></svg></div>
<div class="btn" style="left:1272px;top:835px;width:25px;height:21px;background:#f5f5f5;line-height:20px;font-size:12px">X</div>
<div class="cell" style="left:15px;top:857px;width:50px;height:22px;"></div>
<div class="cell" style="left:65px;top:857px;width:230px;height:22px;">RI112500BT0</div>
<div class="cell" style="left:295px;top:857px;width:69px;height:22px;">Put</div>
<div class="cell" style="left:364px;top:857px;width:86px;height:22px;">20.08.2020</div>
<div class="cell" style="left:450px;top:857px;width:103px;height:22px;">21</div>
<div class="cell" style="left:553px;top:857px;width:71px;height:22px;">-3</div>
<div class="cell" style="left:624px;top:857px;width:82px;height:22px;">1210</div>
<div class="cell" style="left:706px;top:857px;width:127px;height:22px;">42,72</div>
<div class="cell" style="left:833px;top:857px;width:105px;height:22px;">732,42</div>
<div class="cell" style="left:938px;top:857px;width:52px;height:22px;background:#90ee90;">1432,74</div>
<div class="cell" style="left:990px;top:857px;width:90px;height:22px;">35,84</div>
<div class="cell" style="left:1080px;top:857px;width:51px;height:22px;">0,4</div>
<div class="cell" style="left:1131px;top:857px;width:56px;height:22px;">-6,1E-05</div>
<div class="cell" style="left:1187px;top:857px;width:44px;height:22px;">-189,73</div>
<div class="cell" style="left:1231px;top:857px;width:41px;height:22px;">162,87</div>
<div class="cell" style="left:1272px;top:857px;width:26px;height:22px;"></div>
<div class="cb sunk cbw" style="left:33px;top:861px;width:13px;height:13px;"><svg width="13" height="13" viewBox="0 0 13 13" style="left:0;top:0" shape-rendering="crispEdges"><path d="M3 5h1v3h-1zM4 6h1v3h-1zM5 7h1v3h-1zM6 6h1v3h-1zM7 5h1v3h-1zM8 4h1v3h-1zM9 3h1v3h-1z" fill="#000"/></svg></div>
<div class="btn" style="left:1272px;top:857px;width:25px;height:21px;background:#f5f5f5;line-height:20px;font-size:12px">X</div>
<div class="cell" style="left:15px;top:879px;width:50px;height:22px;"></div>
<div class="cell" style="left:65px;top:879px;width:230px;height:22px;">FixedProfit</div>
<div class="cell" style="left:295px;top:879px;width:69px;height:22px;"></div>
<div class="cell" style="left:364px;top:879px;width:86px;height:22px;"></div>
<div class="cell" style="left:450px;top:879px;width:103px;height:22px;"></div>
<div class="cell" style="left:553px;top:879px;width:71px;height:22px;"></div>
<div class="cell" style="left:624px;top:879px;width:82px;height:22px;"></div>
<div class="cell" style="left:706px;top:879px;width:127px;height:22px;"></div>
<div class="cell" style="left:833px;top:879px;width:105px;height:22px;"></div>
<div class="cell" style="left:938px;top:879px;width:52px;height:22px;background:#ffb6c1;">-470</div>
<div class="cell" style="left:990px;top:879px;width:90px;height:22px;"></div>
<div class="cell" style="left:1080px;top:879px;width:51px;height:22px;"></div>
<div class="cell" style="left:1131px;top:879px;width:56px;height:22px;"></div>
<div class="cell" style="left:1187px;top:879px;width:44px;height:22px;"></div>
<div class="cell" style="left:1231px;top:879px;width:41px;height:22px;"></div>
<div class="cell" style="left:1272px;top:879px;width:26px;height:22px;"></div>
<div class="cb sunk cbw" style="left:33px;top:883px;width:13px;height:13px;"><svg width="13" height="13" viewBox="0 0 13 13" style="left:0;top:0" shape-rendering="crispEdges"><path d="M3 5h1v3h-1zM4 6h1v3h-1zM5 7h1v3h-1zM6 6h1v3h-1zM7 5h1v3h-1zM8 4h1v3h-1zM9 3h1v3h-1z" fill="#000"/></svg></div>
<div class="btn" style="left:1272px;top:879px;width:25px;height:21px;background:#f5f5f5;line-height:20px;font-size:12px">X</div>
<div class="cell" style="left:15px;top:901px;width:50px;height:22px;"></div>
<div class="cell" style="left:65px;top:901px;width:230px;height:22px;">Итого:</div>
<div class="cell" style="left:295px;top:901px;width:69px;height:22px;"></div>
<div class="cell" style="left:364px;top:901px;width:86px;height:22px;"></div>
<div class="cell" style="left:450px;top:901px;width:103px;height:22px;"></div>
<div class="cell" style="left:553px;top:901px;width:71px;height:22px;"></div>
<div class="cell" style="left:624px;top:901px;width:82px;height:22px;"></div>
<div class="cell" style="left:706px;top:901px;width:127px;height:22px;"></div>
<div class="cell" style="left:833px;top:901px;width:105px;height:22px;"></div>
<div class="cell" style="left:938px;top:901px;width:52px;height:22px;background:#90ee90;">963,07</div>
<div class="cell" style="left:990px;top:901px;width:90px;height:22px;"></div>
<div class="cell" style="left:1080px;top:901px;width:51px;height:22px;">-0,25</div>
<div class="cell" style="left:1131px;top:901px;width:56px;height:22px;">-0,000171</div>
<div class="cell" style="left:1187px;top:901px;width:44px;height:22px;">-450,37</div>
<div class="cell" style="left:1231px;top:901px;width:41px;height:22px;">332,61</div>
<div class="cell" style="left:1272px;top:901px;width:26px;height:22px;"></div>
<div class="cb sunk cbw" style="left:33px;top:905px;width:13px;height:13px;"><svg width="13" height="13" viewBox="0 0 13 13" style="left:0;top:0" shape-rendering="crispEdges"><path d="M3 5h1v3h-1zM4 6h1v3h-1zM5 7h1v3h-1zM6 6h1v3h-1zM7 5h1v3h-1zM8 4h1v3h-1zM9 3h1v3h-1z" fill="#000"/></svg></div>
<div class="btn" style="left:1272px;top:901px;width:25px;height:21px;background:#f5f5f5;line-height:20px;font-size:12px">X</div>
<div style="left:5px;top:933px;width:1300px;height:23px;background:linear-gradient(180deg,#dadada 0%,#d3d3d3 100%)"></div>
<div style="left:10.5px;top:938px;letter-spacing:-0.272px;">Время обновления 19 мс</div>
<div style="left:139px;top:938px;letter-spacing:0.212px;">Profit=963,07</div>
<div style="left:210.5px;top:938px;letter-spacing:0.189px;">Delta(Δ)=-0,25</div>
<div style="left:288px;top:938px;letter-spacing:-0.110px;">Gamma(Γ)=-0,000171</div>
<div style="left:397.5px;top:938px;letter-spacing:0.057px;">Vega=-450,37</div>
<div style="left:471px;top:938px;letter-spacing:0.061px;">Theta(Θ)=332,61</div>
<div style="left:3px;top:956px;width:1302px;height:1px;background:#808080"></div>
<div style="left:3px;top:957px;width:1302px;height:1px;background:#404040"></div>
<div style="left:0px;top:959px;width:1305px;height:1px;background:#fff"></div>
<div style="left:1089px;top:973px;">RU</div>
<div style="left:1109px;top:969px;width:1px;height:22px;background:#808080"></div>
<div style="left:1110px;top:969px;width:1px;height:22px;background:#fff"></div>
<div style="left:1113px;top:963px;width:189px;height:38px;box-shadow:inset 1px 1px 0 #808080,inset -1px -1px 0 #fff"></div>
<div style="left:1235px;top:968px;letter-spacing:0.2px">20:37</div>
<div style="left:1221px;top:984px;letter-spacing:0.15px">30.07.2020</div>
<svg width="200" height="30" viewBox="0 0 200 30" style="left:1110px;top:967px"><g fill="none" stroke="#7c7c7c" stroke-width="1.300"><path d="M10.500 12.500h3l4-4v13l-4-4h-3z" fill="#f4f4f4"/><path d="M20 11q2.5 4 0 8M22.5 9q4 6 0 12"/></g><rect x="34" y="7" width="16" height="16.500" rx="6.500" fill="#5aa62c"/><path d="M38.500 15.500l2.500 2.500 4.500-5" fill="none" stroke="#fff" stroke-width="1.800"/><g><rect x="63.500" y="10.500" width="11" height="9" fill="#b8b8b8" stroke="#555"/><rect x="62" y="21" width="14" height="2" fill="#777"/><path d="M59.500 7v6M62.500 7v6M58.500 13h5v4h-5z" fill="#eee" stroke="#555"/></g><g><path d="M83.500 8v16" stroke="#666" stroke-width="1.500"/><path d="M84.500 9q5-2 7 0t6 0v8q-4 2-6 0t-7 0z" fill="#f4f4f4" stroke="#777"/></g><g><rect x="176" y="9" width="14.500" height="12" fill="#2a78d4"/><rect x="176" y="9" width="14.500" height="2" fill="#5aa4ec"/><rect x="176" y="18.500" width="14.500" height="2.500" fill="#123a6a"/></g></svg>
<svg width="12" height="12" viewBox="0 0 12 12" style="left:1291px;top:942px" shape-rendering="crispEdges"><g fill="#808080"><rect x="8" y="0" width="2" height="2"/><rect x="4" y="4" width="2" height="2"/><rect x="8" y="4" width="2" height="2"/><rect x="0" y="8" width="2" height="2"/><rect x="4" y="8" width="2" height="2"/><rect x="8" y="8" width="2" height="2"/></g><g fill="#fff"><rect x="9" y="1" width="2" height="2"/><rect x="5" y="5" width="2" height="2"/><rect x="9" y="5" width="2" height="2"/><rect x="1" y="9" width="2" height="2"/><rect x="5" y="9" width="2" height="2"/><rect x="9" y="9" width="2" height="2"/></g></svg>
</body></html>
